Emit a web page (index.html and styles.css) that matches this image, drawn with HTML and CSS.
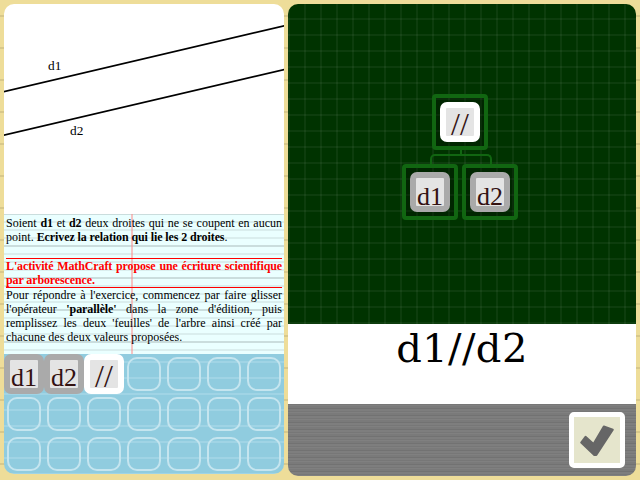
FILE: index.html
```
<!DOCTYPE html>
<html lang="fr">
<head>
<meta charset="utf-8">
<title>MathCraft</title>
<link rel="stylesheet" href="styles.css">
</head>
<body>
<main class="app">
  <section class="left">
    <svg class="figure" viewBox="0 0 280 210" width="280" height="210">
      <line x1="-2" y1="88" x2="282" y2="21.4"/>
      <line x1="-2" y1="131.7" x2="282" y2="65.1"/>
      <text x="44" y="66">d1</text>
      <text x="66" y="131">d2</text>
    </svg>
    <article class="statement">
      <p>Soient <b>d1</b> et <b>d2</b> deux droites qui ne se coupent en aucun point. <b>Ecrivez la relation qui lie les 2 droites</b>.</p>
      <p class="notice">L'activité MathCraft propose une écriture scientifique par arborescence.</p>
      <p>Pour répondre à l'exercice, commencez par faire glisser l'opérateur <b>'parallèle'</b> dans la zone d'édition, puis remplissez les deux 'feuilles' de l'arbre ainsi créé par chacune des deux valeurs proposées.</p>
    </article>
    <div class="inventory">
      <div class="tile value">d1</div>
      <div class="tile value">d2</div>
      <div class="tile operator">//</div>
      <i class="slot"></i><i class="slot"></i><i class="slot"></i><i class="slot"></i>
      <i class="slot"></i><i class="slot"></i><i class="slot"></i><i class="slot"></i><i class="slot"></i><i class="slot"></i><i class="slot"></i>
      <i class="slot"></i><i class="slot"></i><i class="slot"></i><i class="slot"></i><i class="slot"></i><i class="slot"></i><i class="slot"></i>
    </div>
  </section>
  <section class="right">
    <div class="board">
      <div class="node"><div class="tile operator">//</div></div>
      <div class="stem"></div>
      <div class="branch"></div>
      <div class="leaves">
        <div class="node"><div class="tile value">d1</div></div>
        <div class="node"><div class="tile value">d2</div></div>
      </div>
    </div>
    <div class="formula">d1//d2</div>
    <div class="toolbar">
      <button class="check" aria-label="Valider">
        <svg viewBox="0 0 46 46" width="46" height="46"><path d="M7.2 25.5 L11.5 19.8 L19.5 27 L29.8 9.5 L38.8 12.8 L22.3 38 L20.3 38Z"/></svg>
      </button>
    </div>
  </section>
</main>
</body>
</html>
```
FILE: styles.css
```
* { box-sizing: border-box; }
body {
  margin: 0;
  width: 640px;
  height: 480px;
  overflow: hidden;
  background: repeating-linear-gradient(#eedd99 0 15px, #d8c88a 15px 17px, #eedd99 17px 32px);
  font-family: "Liberation Serif", serif;
}
.app {
  display: flex;
  gap: 4px;
  padding: 4px;
  height: 480px;
}
.left {
  width: 280px;
  height: 470px;
  border-radius: 10px;
  overflow: hidden;
}
.figure {
  display: block;
  background: #fff;
  stroke: #000;
  stroke-width: 1.7;
}
.figure text {
  stroke: none;
  fill: #000;
  font: 13.33px "Liberation Serif", serif;
}
.statement {
  height: 140px;
  padding: 2px;
  font-size: 12px;
  line-height: 14px;
  text-align: justify;
  color: #000;
  background:
    linear-gradient(rgba(255, 136, 136, .5), rgba(255, 136, 136, .5)) 127px 0 / 2px 100% no-repeat,
    repeating-linear-gradient(#cadddd 0 1px, #eaffff 1px 7px, #daeeee 7px 9px, #eaffff 9px 15px, #daeeee 15px 17px, #eaffff 17px 23px, #daeeee 23px 25px, #eaffff 25px 31px, #cadddd 31px 32px);
}
.statement p { margin: 0; }
.statement b { letter-spacing: -.1px; }
.statement .notice {
  margin-top: 14px;
  border: solid #f00;
  border-width: 1px 0;
  font-weight: bold;
  letter-spacing: -.12px;
  color: #f00;
}
.inventory {
  display: grid;
  grid-template-columns: repeat(7, 40px);
  grid-template-rows: repeat(3, 40px);
  height: 120px;
  background: repeating-linear-gradient(#90ccdf 0 7px, #a0d4e5 7px 9px, #90ccdf 9px 16px);
}
.slot {
  width: 34px;
  height: 34px;
  margin: 3px;
  border: 2px solid #c5e5ef;
  border-radius: 10px;
}
.tile {
  width: 40px;
  height: 40px;
  border: 6px solid;
  border-radius: 7px;
  background: #e4e4e4;
  color: #311;
  font-size: 26px;
  line-height: 35px;
  display: flex;
  justify-content: center;
  white-space: nowrap;
}
.value { border-color: #aaa; }
.leaves .value { line-height: 37px; }
.operator {
  border-color: #fff;
  font-size: 32px;
  line-height: 32px;
}
.right {
  width: 348px;
  height: 472px;
  border-radius: 10px;
  overflow: hidden;
}
.board {
  display: flex;
  flex-direction: column;
  align-items: center;
  height: 320px;
  padding: 90px 4px 0 0;
  background:
    repeating-linear-gradient(90deg, rgba(255, 255, 255, .05) 0 2px, transparent 2px 16px),
    repeating-linear-gradient(transparent 0 14px, rgba(255, 255, 255, .05) 14px 16px),
    #003300;
}
.node {
  width: 56px;
  height: 56px;
  padding: 4px;
  border: 4px solid #116611;
  border-radius: 4px;
  background: rgba(0, 0, 0, .25);
}
.stem {
  width: 2px;
  height: 4px;
  margin-left: 2px;
  background: #116611;
}
.branch {
  width: 62px;
  height: 10px;
  margin-left: 2px;
  border: solid #116611;
  border-width: 2px 2px 0;
  border-radius: 5px 5px 0 0;
}
.leaves { display: flex; gap: 4px; }
.formula {
  height: 80px;
  background: #fff;
  color: #000;
  font: 40px/49px "DejaVu Serif", serif;
  letter-spacing: .4px;
  text-align: center;
}
.toolbar {
  display: flex;
  justify-content: flex-end;
  height: 72px;
  padding: 8px 11px;
  background: repeating-linear-gradient(#777 0 1px, #808080 1px 2px, #7a7a7a 2px 4px, #727272 4px 5px, #7e7e7e 5px 7px);
}
.check {
  width: 56px;
  height: 56px;
  padding: 0;
  border: 5px solid #fff;
  border-radius: 5px;
  background: #e5e5cc;
}
.check svg { display: block; }
.check path {
  fill: #666;
  stroke: #666;
  stroke-width: 2;
  stroke-linejoin: round;
}
```
